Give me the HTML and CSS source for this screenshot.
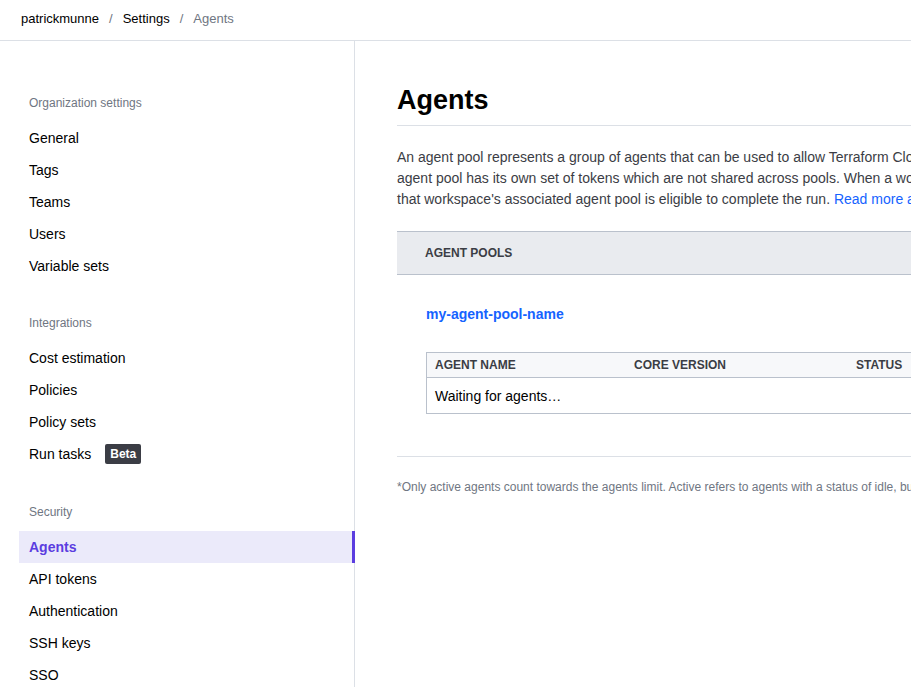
FILE: index.html
```html
<!DOCTYPE html>
<html lang="en">
<head>
<meta charset="utf-8">
<title>Agents</title>
<link rel="stylesheet" href="styles.css">
</head>
<body>
<header class="topbar">
  <nav class="crumbs">
    <span class="crumb">patrickmunne</span>
    <span class="sep">/</span>
    <span class="crumb">Settings</span>
    <span class="sep">/</span>
    <span class="crumb current">Agents</span>
  </nav>
</header>
<div class="layout">
  <aside class="sidebar">
    <section class="group">
      <h3 class="group-title">Organization settings</h3>
      <ul class="nav">
        <li class="nav-item">General</li>
        <li class="nav-item">Tags</li>
        <li class="nav-item">Teams</li>
        <li class="nav-item">Users</li>
        <li class="nav-item">Variable sets</li>
      </ul>
    </section>
    <section class="group">
      <h3 class="group-title">Integrations</h3>
      <ul class="nav">
        <li class="nav-item">Cost estimation</li>
        <li class="nav-item">Policies</li>
        <li class="nav-item">Policy sets</li>
        <li class="nav-item">Run tasks <span class="badge">Beta</span></li>
      </ul>
    </section>
    <section class="group">
      <h3 class="group-title">Security</h3>
      <ul class="nav">
        <li class="nav-item active">Agents</li>
        <li class="nav-item">API tokens</li>
        <li class="nav-item">Authentication</li>
        <li class="nav-item">SSH keys</li>
        <li class="nav-item">SSO</li>
      </ul>
    </section>
  </aside>
  <main class="main">
    <div class="content">
      <h1 class="title">Agents</h1>
      <p class="intro">An agent pool represents a group of agents that can be used to allow Terraform Cloud to communicate with isolated, private, or on-premises infrastructure. Each<br>agent pool has its own set of tokens which are not shared across pools. When a workspace is configured to execute runs using agents, any available agent in<br>that workspace's associated agent pool is eligible to complete the run. <a class="link" href="#">Read more about agents.</a></p>
      <section class="pools">
        <div class="pools-head">AGENT POOLS</div>
        <div class="pool">
          <a class="pool-name" href="#">my-agent-pool-name</a>
          <div class="table">
            <div class="row head">
              <div class="cell">AGENT NAME</div>
              <div class="cell">CORE VERSION</div>
              <div class="cell">STATUS</div>
              <div class="cell">LAST SEEN</div>
            </div>
            <div class="row body">
              <div class="cell">Waiting for agents…</div>
            </div>
          </div>
        </div>
      </section>
      <p class="note">*Only active agents count towards the agents limit. Active refers to agents with a status of idle, busy, or unknown.</p>
    </div>
  </main>
</div>
</body>
</html>
```
FILE: styles.css
```css
* { box-sizing: border-box; }
html, body { margin: 0; padding: 0; }
body {
  font-family: "Liberation Sans", Arial, sans-serif;
  color: #000;
  background: #fff;
  width: 911px;
  height: 687px;
  overflow: hidden;
}
.topbar {
  height: 41px;
  border-bottom: 1px solid #dce0e6;
  display: flex;
  align-items: center;
  padding: 0 0 4px 21px;
}
.crumbs {
  display: flex;
  align-items: center;
  font-size: 13px;
}
.crumb { color: #000; }
.crumb.current { color: #6f7682; }
.sep { color: #6f7682; margin: 0 10px; }

.layout {
  display: flex;
  height: 646px;
}
.sidebar {
  width: 355px;
  flex: none;
  border-right: 1px solid #dce0e6;
  padding: 54px 0 0 19px;
}
.group + .group { margin-top: 33px; }
.group:nth-child(3) { margin-top: 34px; }
.group-title {
  margin: 0 0 11px;
  padding-left: 10px;
  font-size: 12px;
  line-height: 16px;
  font-weight: normal;
  color: #6f7682;
}
.nav { list-style: none; margin: 0; padding: 0; }
.nav-item {
  height: 32px;
  display: flex;
  align-items: center;
  padding-left: 10px;
  font-size: 14px;
  color: #000;
}
.nav-item.active {
  margin-right: -1px;
  background: #ebeafa;
  color: #5b3de0;
  font-weight: bold;
  box-shadow: inset -3px 0 0 #5b3de0;
}
.badge {
  margin-left: 14px;
  background: #3b3d45;
  color: #fff;
  font-size: 12px;
  font-weight: bold;
  line-height: 20px;
  padding: 0 5px;
  border-radius: 2px;
}

.main {
  flex: none;
  width: 820px;
  padding: 43px 0 0 42px;
}
.content { width: 760px; }
.title {
  margin: 0;
  font-size: 27px;
  line-height: 32px;
  font-weight: bold;
  padding-bottom: 9px;
  border-bottom: 1px solid #dce0e6;
}
.intro {
  margin: 21px 0 0;
  font-size: 14px;
  line-height: 21px;
  color: #3b3d45;
  white-space: nowrap;
}
.link { color: #1563ff; text-decoration: none; }
.pools {
  margin-top: 21px;
  border-bottom: 1px solid #dce0e6;
  padding-bottom: 42px;
}
.pools-head {
  height: 44px;
  background: #e9ebef;
  border-top: 1px solid #bac1cc;
  border-bottom: 1px solid #bac1cc;
  display: flex;
  align-items: center;
  padding-left: 28px;
  font-size: 12px;
  font-weight: bold;
  color: #3b3d45;
}
.pool { padding: 29px 29px 0; }
.pool-name {
  display: block;
  font-size: 14px;
  line-height: 20px;
  font-weight: bold;
  color: #1563ff;
  text-decoration: none;
}
.table {
  margin-top: 28px;
  border: 1px solid #bac1cc;
}
.row {
  display: grid;
  grid-template-columns: 199px 222px 150px 1fr;
}
.row.head {
  height: 25px;
  background: #f7f8fa;
  border-bottom: 1px solid #bac1cc;
  font-size: 12px;
  font-weight: bold;
  color: #3b3d45;
}
.row.body {
  height: 35px;
  grid-template-columns: 1fr;
  font-size: 14px;
  color: #000;
}
.cell {
  display: flex;
  align-items: center;
  padding-left: 8px;
}
.note {
  margin: 22px 0 0;
  font-size: 12px;
  line-height: 16px;
  color: #6f7682;
  white-space: nowrap;
}
```
